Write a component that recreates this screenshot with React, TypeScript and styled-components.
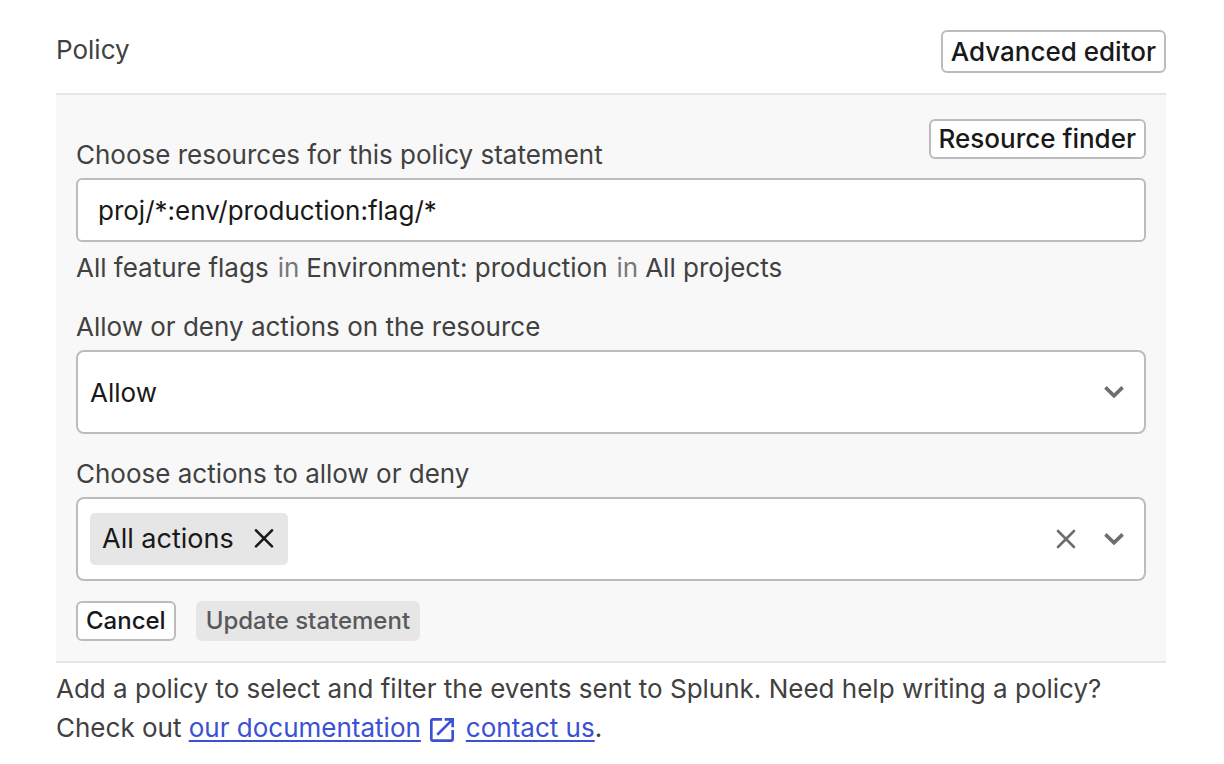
import React from "react";
import styled, { createGlobalStyle } from "styled-components";

const GlobalStyle = createGlobalStyle`
  * { box-sizing: border-box; }
  body {
    margin: 0;
    background: #fff;
    color: #414141;
    font-family: Inter, "Liberation Sans", sans-serif;
    font-size: 26px;
    line-height: 32px;
  }
  button, input, select { font: inherit; color: inherit; margin: 0; }
`;

const Section = styled.section`
  padding: 30px 58px 20px 56px;
`;

const Header = styled.header`
  display: flex;
  justify-content: space-between;
  align-items: flex-start;
  padding-bottom: 20px;
`;

const Title = styled.h2`
  margin: 0;
  padding-top: 4px;
  font-size: 26px;
  font-weight: 400;
`;

const Button = styled.button<{ $height?: number; $small?: boolean }>`
  height: ${(p) => p.$height ?? 40}px;
  padding: 0 8px;
  border: 2px solid #bcbcbc;
  border-radius: 6px;
  background: #fff;
  color: #191919;
  font-size: ${(p) => (p.$small ? 24 : 26)}px;
  font-weight: 500;
  line-height: 32px;
  white-space: nowrap;
  &:disabled {
    border-color: #e6e6e6;
    background: #e6e6e6;
    color: #58595b;
  }
`;

const Statement = styled.form`
  display: flex;
  flex-direction: column;
  padding: 24px 20px 20px;
  border-top: 2px solid #e6e6e6;
  border-bottom: 2px solid #e6e6e6;
  background: #f8f8f8;
`;

const FieldHead = styled.div`
  display: flex;
  justify-content: space-between;
  align-items: flex-start;
`;

const Label = styled.label<{ $top?: number }>`
  display: block;
  padding: ${(p) => p.$top ?? 0}px 0 7px;
`;

const TextInput = styled.input`
  width: 100%;
  height: 64px;
  padding: 0 20px;
  border: 2px solid #bcbcbc;
  border-radius: 6px;
  background: #fff;
  color: #191919;
`;

const Summary = styled.p`
  margin: 0;
  padding: 10px 0 27px;
`;

const Joiner = styled.span`
  margin: 0 7px 0 9px;
  color: #77787b;
`;

const SelectWrap = styled.div`
  display: grid;
  align-items: center;
  margin-bottom: 24px;
  color: #6d6e71;
  > * { grid-area: 1 / 1; }
  > svg { justify-self: end; margin-right: 22px; pointer-events: none; }
`;

const Select = styled.select`
  appearance: none;
  width: 100%;
  height: 84px;
  padding: 2px 12px 0;
  border: 2px solid #bcbcbc;
  border-radius: 8px;
  background: #fff;
  color: #191919;
`;

const MultiSelect = styled.div`
  display: flex;
  align-items: center;
  height: 84px;
  margin-bottom: 20px;
  padding: 0 20px 0 12px;
  border: 2px solid #bcbcbc;
  border-radius: 8px;
  background: #fff;
  color: #6d6e71;
`;

const Tag = styled.span`
  display: flex;
  align-items: center;
  gap: 20px;
  height: 52px;
  padding: 0 14px 0 12px;
  border-radius: 5px;
  background: #e6e6e6;
  color: #191919;
  font-size: 27px;
  white-space: nowrap;
`;

const TagInput = styled.input`
  flex: 1;
  min-width: 0;
  border: 0;
  outline: 0;
  background: transparent;
`;

const IconButton = styled.button`
  display: flex;
  padding: 0;
  border: 0;
  background: none;
`;

const Indicators = styled.div`
  display: flex;
  align-items: center;
  gap: 28px;
`;

const Actions = styled.div`
  display: flex;
  gap: 20px;
`;

const Help = styled.p`
  margin: 0;
  padding-top: 6px;
  line-height: 39px;
`;

const Link = styled.a`
  color: #3b50d5;
  text-decoration: underline;
  text-decoration-thickness: 2px;
  text-underline-offset: 3px;
  white-space: nowrap;
`;

const External = styled.svg`
  margin: 0 12px 0 9px;
  vertical-align: -5px;
  color: #3b50d5;
`;

const Chevron = () => (
  <svg width="20" height="12" viewBox="0 0 20 12" fill="none" stroke="currentColor" strokeWidth="3.6" aria-hidden="true">
    <path d="M1.4 1.4 10 9.8 18.6 1.4" />
  </svg>
);

const ClearCross = () => (
  <svg width="20" height="20" viewBox="0 0 20 20" fill="none" stroke="currentColor" strokeWidth="2.6" strokeLinecap="round" aria-hidden="true">
    <path d="M2 2 18 18M18 2 2 18" />
  </svg>
);

const RemoveCross = () => (
  <svg width="20" height="20" viewBox="0 0 20 20" fill="none" stroke="currentColor" strokeWidth="2.6" strokeLinecap="round" aria-hidden="true">
    <path d="M2 1.3 18 17.3M18 1.3 2 17.3" />
  </svg>
);

export default function App() {
  return (
    <Section>
      <GlobalStyle />
      <Header>
        <Title>Policy</Title>
        <Button type="button" $height={43}>Advanced editor</Button>
      </Header>
      <Statement onSubmit={(e) => e.preventDefault()}>
        <FieldHead>
          <Label htmlFor="resources" $top={20}>Choose resources for this policy statement</Label>
          <Button type="button">Resource finder</Button>
        </FieldHead>
        <TextInput id="resources" type="text" defaultValue="proj/*:env/production:flag/*" />
        <Summary>
          All feature flags<Joiner>in</Joiner>Environment: production<Joiner>in</Joiner>All projects
        </Summary>
        <Label htmlFor="effect">Allow or deny actions on the resource</Label>
        <SelectWrap>
          <Select id="effect" defaultValue="Allow">
            <option>Allow</option>
            <option>Deny</option>
          </Select>
          <Chevron />
        </SelectWrap>
        <Label htmlFor="actions">Choose actions to allow or deny</Label>
        <MultiSelect>
          <Tag>
            All actions
            <IconButton type="button" aria-label="Remove All actions"><RemoveCross /></IconButton>
          </Tag>
          <TagInput id="actions" type="text" />
          <Indicators>
            <IconButton type="button" aria-label="Clear actions"><ClearCross /></IconButton>
            <IconButton type="button" aria-label="Show actions"><Chevron /></IconButton>
          </Indicators>
        </MultiSelect>
        <Actions>
          <Button type="button" $small>Cancel</Button>
          <Button type="submit" $small disabled>Update statement</Button>
        </Actions>
      </Statement>
      <Help>
        Add a policy to select and filter the events sent to Splunk. Need help writing a policy? Check out{" "}
        <Link href="#documentation">our documentation</Link>
        <External width="24" height="24" viewBox="3 3 18 18" fill="currentColor" aria-hidden="true">
          <path d="M19 19H5V5h7V3H5c-1.11 0-2 .9-2 2v14c0 1.1.89 2 2 2h14c1.1 0 2-.9 2-2v-7h-2v7zM14 3v2h3.59l-9.83 9.83 1.41 1.41L19 6.41V10h2V3h-7z" />
        </External>
        <Link href="#contact">contact us</Link>.
      </Help>
    </Section>
  );
}
